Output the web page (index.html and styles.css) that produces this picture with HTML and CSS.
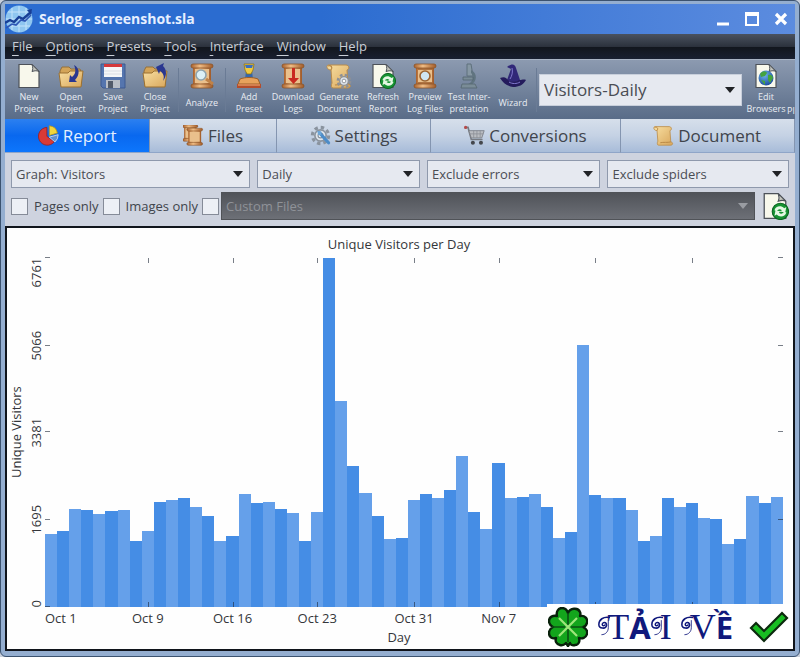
FILE: index.html
```html
<!DOCTYPE html>
<html lang="en">
<head>
    <meta charset="UTF-8">
    <meta name="viewport" content="width=device-width, initial-scale=1.0">
    <title>Serlog - screenshot.sla</title>
    <link rel="stylesheet" href="styles.css">
</head>
<body>
    <!-- Shared icon shapes -->
    <svg class="defs" width="0" height="0" aria-hidden="true">
        <defs>
            <linearGradient id="gold" x1="0" x2="1" y1="0" y2="1">
                <stop offset="0" stop-color="#f8dfa2"/>
                <stop offset="1" stop-color="#d9a75c"/>
            </linearGradient>
            <linearGradient id="copper" x1="0" x2="1">
                <stop offset="0" stop-color="#a8602c"/>
                <stop offset=".4" stop-color="#f0bd85"/>
                <stop offset="1" stop-color="#a05a28"/>
            </linearGradient>
            <radialGradient id="globe" cx=".4" cy=".3" r=".8">
                <stop offset="0" stop-color="#6fb6ea"/>
                <stop offset="1" stop-color="#123f96"/>
            </radialGradient>
        </defs>
        <symbol id="page" viewBox="0 0 26 26">
            <path d="M3 1.500h13l7 7V24.500H3z" fill="#f8f8ec" stroke="#4d5259" stroke-width="1.200"/>
            <path d="M16 1.500c1 3 1 5 0 7 3-1 5-1 7 0z" fill="#c3c4bd" stroke="#4d5259"/>
        </symbol>
        <symbol id="folder" viewBox="0 0 26 26">
            <path d="M2 8l2-4h7l2 2h9l1 3v14H3z" fill="#d3a458" stroke="#94703a"/>
            <path d="M1 10h9l2-2h13l-2 16H3z" fill="url(#gold)" stroke="#9b7132"/>
        </symbol>
        <symbol id="scroll" viewBox="0 0 26 26">
            <path d="M4 4h18v18H4z" fill="url(#copper)"/>
            <path d="M6 6h14v14H6z" fill="#eac08c"/>
            <rect x="2" y="1" width="22" height="4" rx="2" fill="url(#copper)" stroke="#8a5429" stroke-width=".8"/>
            <rect x="2" y="21" width="22" height="4" rx="2" fill="url(#copper)" stroke="#8a5429" stroke-width=".8"/>
        </symbol>
        <symbol id="refresh-page" viewBox="0 0 26 26">
            <use href="#page"/>
            <circle cx="18" cy="18" r="7.600" fill="#169332" stroke="#0a6720"/>
            <path d="M12.500 17c1-4 6-5 9-2l2-1-1 5-5-1 2-1c-2-2-4-1-5 1zM23.500 19c-1 4-6 5-9 2l-2 1 1-5 5 1-2 1c2 2 4 1 5-1z" fill="#e4f8e2"/>
        </symbol>
        <symbol id="parchment" viewBox="0 0 26 26">
            <path d="M2 2h18c3 0 4 4 1 5l1 14c3 0 3 4 0 4H7c-2 0-2-3-1-5L5 7C1 7 0 3 2 2z" fill="url(#gold)" stroke="#b98c4c"/>
            <path d="M2 3c3-1 5 1 3 4M9 22c4-1 9 0 13-1" fill="none" stroke="#b98744" stroke-width="1.200"/>
        </symbol>
        <symbol id="gear" viewBox="0 0 26 26">
            <circle cx="13" cy="13" r="10" fill="none" stroke="currentColor" stroke-width="4" stroke-dasharray="4.200 3.650"/>
            <circle cx="13" cy="13" r="7" fill="#dde4ec" stroke="currentColor" stroke-width="2"/>
            <circle cx="13" cy="13" r="3" fill="#fff" stroke="currentColor" stroke-width="1.500"/>
        </symbol>
        <symbol id="swash" viewBox="0 0 14 26">
            <path d="M14 2C6 0 1 5 1 10c0 5 8 6 9 1 0-4-5-4-5-1 0 2 3 2 3 0" fill="none" stroke="#10197c" stroke-width="1.800"/>
            <path d="M12 5v9c0 4-3 8-8 8" fill="none" stroke="#10197c"/>
        </symbol>
    </svg>

    <div class="window">
        <header class="titlebar">
            <svg class="app-icon" viewBox="0 0 28 28" aria-hidden="true">
                <circle cx="14" cy="14" r="13.500" fill="#8fc6f0"/>
                <path d="M14 1v26M7 3v22M21 3v22M1 14h26M3 7h22M3 21h22" stroke="#c3e3fa" fill="none"/>
                <path d="M0 18l5-3 4 2 5-5 4 2 8-7" fill="none" stroke="#183f96" stroke-width="2.400"/>
                <path d="M1 23l6-4 4 1 5-5 4 1 6-6" fill="none" stroke="#2e56b4" stroke-width="1.600"/>
                <path d="M22 5l5-1-1 6z" fill="#183f96"/>
            </svg>
            <h1>Serlog - screenshot.sla</h1>
            <div class="window-controls">
                <button type="button" aria-label="Minimize"><svg viewBox="0 0 14 14"><path d="M1 12h12" stroke="#fff" stroke-width="3"/></svg></button>
                <button type="button" aria-label="Maximize"><svg viewBox="0 0 14 14"><path d="M1 1h12v12H1z" fill="none" stroke="#fff" stroke-width="2"/><path d="M0 2h14" stroke="#fff" stroke-width="4"/></svg></button>
                <button type="button" aria-label="Close"><svg viewBox="0 0 14 14"><path d="M2 2l10 10M12 2L2 12" stroke="#fff" stroke-width="3.200"/></svg></button>
            </div>
        </header>

        <nav class="menubar">
            <a href="#file"><u>F</u>ile</a>
            <a href="#options"><u>O</u>ptions</a>
            <a href="#presets"><u>P</u>resets</a>
            <a href="#tools"><u>T</u>ools</a>
            <a href="#interface"><u>I</u>nterface</a>
            <a href="#window"><u>W</u>indow</a>
            <a href="#help"><u>H</u>elp</a>
        </nav>

        <div class="toolbar">
            <button type="button" class="tool">
                <svg viewBox="0 0 26 26"><use href="#page"/></svg>
                <span>New<br>Project</span>
            </button>
            <button type="button" class="tool">
                <svg viewBox="0 0 26 26"><use href="#folder"/><path d="M16 2c6 3 6 10 1 15l2 2-8 0 1-7 2 2c4-3 4-7 2-12z" fill="#2a3790"/></svg>
                <span>Open<br>Project</span>
            </button>
            <button type="button" class="tool">
                <svg viewBox="0 0 26 26">
                    <path d="M1 1h24v24H3l-2-2z" fill="#5575ae" stroke="#3f5a90"/>
                    <path d="M4 1h18v13H4z" fill="#f5f6f8"/><path d="M4 1h18v3H4z" fill="#d5393c"/>
                    <path d="M4 8h18M4 11h18" stroke="#dadde4"/>
                    <path d="M6 17h14v8H6z" fill="#b9bec6"/><path d="M8 18h5v7H8z" fill="#525b6a"/>
                </svg>
                <span>Save<br>Project</span>
            </button>
            <button type="button" class="tool">
                <svg viewBox="0 0 26 26"><use href="#folder"/><path d="M21 18c2-5 0-8-3-10l-1 3-3-7 8-4-1 3c4 4 4 10 0 15z" fill="#2a3790"/></svg>
                <span>Close<br>Project</span>
            </button>
            <i class="separator"></i>
            <button type="button" class="tool">
                <svg viewBox="0 0 26 26"><use href="#scroll"/><path d="M17 16l7 5" stroke="#c08248" stroke-width="3"/><circle cx="12" cy="12" r="5" fill="#dcf0f6" stroke="#8fa3ad" stroke-width="1.600"/></svg>
                <span>Analyze</span>
            </button>
            <i class="separator"></i>
            <button type="button" class="tool">
                <svg viewBox="0 0 26 26">
                    <path d="M10 8h6l1 8H9z" fill="#3567ab"/><path d="M8 1h10l-1 6-2 4h-4L9 7z" fill="#efc93f" stroke="#917218" stroke-width=".8"/><path d="M9 2h8l-1 3h-6z" fill="#3a6fc0"/>
                    <path d="M4 16c5-2 13-2 18 0l2 5H2z" fill="#e8a25c" stroke="#9c5f28"/><path d="M1 21h24v4H1z" fill="#b54c2b"/><path d="M2 22h22" stroke="#f0b477"/>
                </svg>
                <span>Add<br>Preset</span>
            </button>
            <button type="button" class="tool wide">
                <svg viewBox="0 0 26 26"><use href="#scroll"/><path d="M12 5h3v10h4l-5.500 6L8 15h4z" fill="#c92a1f"/></svg>
                <span>Download<br>Logs</span>
            </button>
            <button type="button" class="tool wide">
                <svg viewBox="0 0 26 26" color="#8d9096"><use href="#parchment"/><use href="#gear" x="10" y="10" width="16" height="16"/></svg>
                <span>Generate<br>Document</span>
            </button>
            <button type="button" class="tool">
                <svg viewBox="0 0 26 26"><use href="#refresh-page"/></svg>
                <span>Refresh<br>Report</span>
            </button>
            <button type="button" class="tool">
                <svg viewBox="0 0 26 26"><use href="#scroll"/><path d="M6 6h14M6 20h14" stroke="#9b5b2a" stroke-width="1.500"/><circle cx="13" cy="13" r="5" fill="#cfe6f2" stroke="#9c6431" stroke-width="1.600"/></svg>
                <span>Preview<br>Log Files</span>
            </button>
            <button type="button" class="tool wide">
                <svg viewBox="0 0 26 26">
                    <path d="M11 1h4l2 12h-6z" fill="#8798a4" stroke="#5e707c"/><path d="M15 7c7 3 6 12 0 15h-5c7-2 9-9 5-12z" fill="#607480"/>
                    <path d="M7 14h10v3H7zM6 21h13l2 4H5z" fill="#7a8c97" stroke="#54656f" stroke-width=".8"/>
                </svg>
                <span>Test Inter-<br>pretation</span>
            </button>
            <button type="button" class="tool">
                <svg viewBox="0 0 26 26">
                    <path d="M7 17L11 6l-4-2c5-4 8-3 9 1l4 12c-3 3-10 3-13 0z" fill="#312878"/><path d="M0 15c5-2 6 0 9 3 4 1 8 1 10-1 3 0 5-1 7 0-3 5-7 7-13 7C7 23 3 20 0 15z" fill="#241b5c"/>
                    <path d="M12 5c1 4 0 8-2 11M9 19c3 2 8 2 11 0" fill="none" stroke="#8179cf"/>
                </svg>
                <span>Wizard</span>
            </button>
            <i class="separator"></i>
            <select class="preset-select" aria-label="Preset">
                <option>Visitors-Daily</option>
            </select>
            <button type="button" class="tool">
                <svg viewBox="0 0 26 26"><use href="#page"/><circle cx="13" cy="15" r="7.500" fill="url(#globe)"/><path d="M7 11c3-4 6-3 7-1l-2 3-4 1zM15 12c3-1 5 1 5 3l-3 5-2-3zM8 17l4 1v4z" fill="#45a33f"/></svg>
                <span>Edit<br>Browsers</span>
            </button>
            <button type="button" class="tool cut"><span><br>Pl</span></button>
        </div>

        <nav class="tabs">
            <a href="#report" class="tab active">
                <svg viewBox="0 0 26 26"><path d="M11 3a11 11 0 1 0 9 18l-9-7z" fill="#d93a36" stroke="#9c1e1e"/><path d="M14 1a11 11 0 0 1 10 9l-10 3z" fill="#f2d63c" stroke="#b4921b"/><path d="M25 12a12 12 0 0 1-4 9l-7-6z" fill="#5f8fd2" stroke="#d8e4f4"/></svg>
                Report
            </a>
            <a href="#files" class="tab">
                <svg viewBox="0 0 26 26"><use href="#scroll" x="-2" y="-1" width="22" height="22"/><use href="#scroll" x="3" y="3" width="23" height="23"/></svg>
                Files
            </a>
            <a href="#settings" class="tab">
                <svg viewBox="0 0 26 26" color="#8a939e"><use href="#gear"/><path d="M12 10l11 12" stroke="#4c8cc8" stroke-width="4" stroke-linecap="round"/><path d="M9 7l5 1v5l-4-1z" fill="#6aa5d8"/></svg>
                Settings
            </a>
            <a href="#conversions" class="tab">
                <svg viewBox="0 0 26 26"><path d="M1 3h4l4 15h14" fill="none" stroke="#777b82" stroke-width="2"/><path d="M6 7h19l-3 9H9z" fill="#b9bcc1" stroke="#777b82"/><path d="M12 7v9M16 7v9M20 7v9M7 11h17" stroke="#8b8f96"/><circle cx="11" cy="22" r="2.500" fill="#44474d"/><circle cx="21" cy="22" r="2.500" fill="#44474d"/><circle cx="2" cy="3" r="2" fill="#b44a4a"/></svg>
                Conversions
            </a>
            <a href="#document" class="tab">
                <svg viewBox="0 0 26 26"><use href="#parchment"/></svg>
                Document
            </a>
        </nav>

        <form class="filters">
            <div class="filter-row">
                <select aria-label="Graph"><option>Graph: Visitors</option></select>
                <select aria-label="Interval"><option>Daily</option></select>
                <select aria-label="Errors"><option>Exclude errors</option></select>
                <select aria-label="Spiders"><option>Exclude spiders</option></select>
            </div>
            <div class="file-row">
                <input type="checkbox" id="pages-only"><label for="pages-only">Pages only</label>
                <input type="checkbox" id="images-only"><label for="images-only">Images only</label>
                <input type="checkbox" id="custom-files" aria-label="Custom files">
                <select class="custom-files" aria-label="Custom file list" disabled><option>Custom Files</option></select>
                <button type="button" class="refresh" aria-label="Refresh report"><svg viewBox="0 0 26 26"><use href="#refresh-page"/></svg></button>
            </div>
        </form>

        <main class="report">
            <h2>Unique Visitors per Day</h2>
            <div class="y-title">Unique Visitors</div>
            <div class="y-axis" id="y-axis"></div>
            <div class="plot" id="plot"></div>
            <div class="x-axis" id="x-axis"></div>
            <div class="x-title">Day</div>

            <a href="#download" class="download">
                <svg class="clover" viewBox="0 0 40 40" aria-hidden="true">
                    <path d="M20 6C22 1 30 0 32 5c1 2 0 3 0 4 5-1 8 3 7 7-1 3-3 4-4 4 2 1 5 3 4 7-1 4-5 5-8 4 1 3 0 7-4 7-3 1-5-1-5-2l-2 3-2-3c-1 1-3 3-6 2-4-1-5-4-4-7-3 1-7 0-7-5 0-3 2-5 4-6-2-1-4-3-4-6 0-4 4-6 8-5-1-4 1-8 5-8 3 0 5 2 6 5z" fill="#13a51c" stroke="#09210b" stroke-width="2.400" stroke-linejoin="round"/>
                    <path d="M20 6v12M20 22v13M4 20h13M23 20h12" stroke="#0c5013" stroke-width="1.600"/>
                    <path d="M11 11l18 18M29 11L11 29" stroke="#a0e67b" stroke-width="2.200"/>
                </svg>
                <span class="download-text"><svg viewBox="0 0 14 26" aria-hidden="true"><use href="#swash"/></svg>T<b>Ả</b><svg viewBox="0 0 14 26" aria-hidden="true"><use href="#swash"/></svg>I <svg viewBox="0 0 14 26" aria-hidden="true"><use href="#swash"/></svg>V<b>Ề</b></span>
                <svg class="check" viewBox="0 0 40 32" aria-hidden="true">
                    <path d="M2 17l5-5 8 8L33 2l5 5-23 23z" fill="#18bd22" stroke="#0c2a0e" stroke-width="2.200"/>
                </svg>
            </a>
        </main>
    </div>

    <script>
        // Unique visitors for each day, starting October 1
        const visitors = [
            1405, 1477, 1898, 1879, 1801, 1852, 1885, 1276, 1463, 2040,
            2079, 2118, 1943, 1762, 1282, 1385, 2182, 2021, 2040, 1904,
            1826, 1282, 1840, 6761, 3983, 2739, 2215, 1768, 1308, 1341,
            2065, 2195, 2104, 2260, 2934, 1846, 1510, 2798, 2118, 2137,
            2195, 1943, 1346, 1444, 5071, 2176, 2104, 2118, 1879, 1282,
            1385, 2104, 1937, 2021, 1716, 1710, 1230, 1327, 2157, 2007, 2137
        ];
        const max = 6761;
        const yTicks = [0, 1695, 3381, 5066, 6761];
        const xTicks = [
            { day: 0, label: 'Oct 1' },
            { day: 8, label: 'Oct 9' },
            { day: 15, label: 'Oct 16' },
            { day: 22, label: 'Oct 23' },
            { day: 30, label: 'Oct 31' },
            { day: 37, label: 'Nov 7' },
            { day: 45 },
            { day: 53 }
        ];

        const plot = document.getElementById('plot');
        const yAxis = document.getElementById('y-axis');
        const xAxis = document.getElementById('x-axis');

        function add(parent, className, side, percent, text) {
            const el = document.createElement('span');
            el.className = className;
            el.style[side] = percent + '%';
            el.textContent = text || '';
            parent.appendChild(el);
        }

        visitors.forEach((count) => add(plot, 'bar', 'height', count / max * 100));

        yTicks.forEach((value) => {
            const percent = value / max * 100;
            const edge = value === 0 ? ' first' : value === max ? ' last' : '';
            add(yAxis, 'y-label' + edge, 'bottom', percent, String(value));
            add(plot, 'tick left', 'bottom', percent);
            add(plot, 'tick right', 'bottom', percent);
        });

        xTicks.forEach((tick) => {
            const percent = tick.day === 0 ? 0 : (tick.day + 0.5) / visitors.length * 100;
            if (tick.label) {
                add(xAxis, 'x-label' + (tick.day === 0 ? ' first' : ''), 'left', percent, tick.label);
            }
            if (tick.day > 0) {
                add(plot, 'tick top', 'left', percent);
                add(plot, 'tick bottom', 'left', percent);
            }
        });
    </script>
</body>
</html>
```
FILE: styles.css
```css
* {
    box-sizing: border-box;
}

body {
    margin: 0;
    background-color: #c9d0dc;
    font-family: "Open Sans", "Noto Sans", sans-serif;
    font-size: 13px;
    color: #40444c;
}

button {
    font-family: inherit;
    background: none;
    border: none;
    padding: 0;
    cursor: pointer;
}

a {
    color: inherit;
    text-decoration: none;
}

.defs {
    position: absolute;
}

.window {
    display: flex;
    flex-direction: column;
    min-height: 100vh;
    padding: 3px 4px 5px;
    border: 1px solid #3b526f;
    border-radius: 6px;
    background-color: #94aed0;
}

/* Title bar */
.titlebar {
    display: flex;
    align-items: center;
    height: 30px;
    padding-right: 7px;
    background: linear-gradient(to right, #2b6cd0 40%, #5c8cdf);
}

.app-icon {
    width: 28px;
    height: 28px;
}

.titlebar h1 {
    flex: 1;
    margin: 0 0 0 6px;
    font-size: 14px;
    line-height: 20px;
    color: #e6efff;
}

.window-controls {
    display: flex;
    gap: 15px;
}

.window-controls svg {
    display: block;
    width: 14px;
    height: 14px;
}

/* Menu */
.menubar {
    display: flex;
    gap: 13px;
    height: 25px;
    padding: 2px 7px;
    font-size: 13px;
    line-height: 20px;
    color: #c9ced6;
    background: linear-gradient(#4a525f, #2c323d 50%, #12161d 52%, #192031);
}

.menubar u {
    text-underline-offset: 4px;
}

/* Toolbar */
.toolbar {
    display: flex;
    align-items: center;
    height: 60px;
    padding-left: 3px;
    overflow: hidden;
    border-top: 1px solid #a9b4c5;
    background: linear-gradient(#8c9ab0, #596c88);
}

.tool {
    flex: none;
    display: flex;
    flex-direction: column;
    align-items: center;
    width: 42px;
    height: 54px;
    font-size: 9px;
    line-height: 12px;
    color: #e9edf3;
    white-space: nowrap;
}

.tool svg {
    flex: none;
    width: 26px;
    height: 26px;
}

.tool span {
    display: flex;
    flex: 1;
    flex-direction: column;
    justify-content: center;
}

.tool.wide {
    width: 46px;
}

.tool.cut {
    width: 8px;
    align-items: flex-start;
    justify-content: flex-end;
}

.tool.cut span {
    display: block;
    flex: none;
}

.separator {
    flex: none;
    width: 1px;
    height: 44px;
    margin: 0 2px;
    background-color: #6a7b95;
}

select {
    appearance: none;
    min-width: 0;
    height: 28px;
    padding: 0 24px 0 4px;
    border: 1px solid #8f99ac;
    border-radius: 0;
    font-family: inherit;
    font-size: 13px;
    color: #4a4d54;
    background: #e6e9f0 url("data:image/svg+xml,%3Csvg xmlns='http://www.w3.org/2000/svg' width='10' height='6'%3E%3Cpath d='M0 0h10L5 6z' fill='%23202226'/%3E%3C/svg%3E") no-repeat right 6px center;
}

.preset-select {
    flex: 1;
    height: 32px;
    margin-right: 3px;
    border-color: #c8cfdb;
    font-size: 17px;
}

/* Tabs */
.tabs {
    display: flex;
    height: 34px;
}

.tab {
    flex: 1 1 auto;
    display: flex;
    align-items: center;
    justify-content: center;
    gap: 4px;
    font-size: 17px;
    line-height: 24px;
    border-right: 1px solid #8495b0;
    border-bottom: 1px solid #8fa5c8;
    background: linear-gradient(#d6dfeb, #c5d2e4 50%, #a8bcd9);
}

.tab svg {
    width: 21px;
    height: 21px;
}

.tab.active {
    color: #e3efff;
    background: linear-gradient(#2c80f0, #0968ef 50%, #0d76fc);
}

/* Filters */
.filters {
    display: flex;
    flex-direction: column;
    gap: 4px;
    padding: 7px 6px 6px;
    background-color: #ced3df;
}

.filter-row {
    display: grid;
    grid-template-columns: 240fr 163fr 174fr 182fr;
    gap: 7px;
}

.file-row {
    display: flex;
    align-items: center;
}

.file-row label {
    margin: 0 4px 0 6px;
    white-space: nowrap;
}

input[type="checkbox"] {
    appearance: none;
    flex: none;
    width: 17px;
    height: 17px;
    margin: 0;
    border: 1px solid #858b98;
    background-color: #edf0f6;
}

input[type="checkbox"]:checked {
    background-color: #2c80f0;
}

.custom-files {
    flex: 1;
    margin: 0 6px 0 2px;
    border-color: #505358;
    color: #8f9298;
    opacity: 1;
    background: url("data:image/svg+xml,%3Csvg xmlns='http://www.w3.org/2000/svg' width='10' height='6'%3E%3Cpath d='M0 0h10L5 6z' fill='%23999ca2'/%3E%3C/svg%3E") no-repeat right 6px center, linear-gradient(#505359, #6d7077);
}

.refresh svg {
    display: block;
    width: 28px;
    height: 28px;
}

/* Report chart */
.report {
    position: relative;
    flex: 1;
    display: grid;
    grid-template-columns: 20px 18px 1fr;
    grid-template-rows: 30px 1fr 20px 22px;
    padding-right: 10px;
    border: 2px solid #10141b;
    background-color: #fefefe;
    color: #34363a;
}

.report h2 {
    grid-column: 1 / -1;
    margin: 6px 0 0 8px;
    font-size: 13px;
    font-weight: normal;
    line-height: 20px;
    text-align: center;
}

.y-title,
.y-label {
    writing-mode: vertical-rl;
    transform: rotate(180deg);
    line-height: 18px;
}

.y-title {
    text-align: center;
}

.y-axis,
.plot,
.x-axis {
    position: relative;
}

.y-label {
    position: absolute;
    right: 0;
    transform: translateY(50%) rotate(180deg);
}

.y-label.first {
    transform: rotate(180deg);
}

.y-label.last {
    transform: translateY(100%) rotate(180deg);
}

.plot {
    display: flex;
    align-items: flex-end;
}

.bar {
    flex: 1;
    background-color: #65a0ea;
}

.bar:nth-child(even) {
    background-color: #458de5;
}

.tick {
    position: absolute;
    background-color: rgba(30, 40, 55, 0.6);
}

.tick.left,
.tick.right {
    width: 5px;
    height: 1px;
}

.tick.left {
    left: 0;
}

.tick.right {
    right: 0;
}

.tick.top,
.tick.bottom {
    width: 1px;
    height: 5px;
}

.tick.top {
    top: 0;
}

.tick.bottom {
    bottom: 0;
}

.x-axis {
    grid-column: 3;
}

.x-label {
    position: absolute;
    line-height: 22px;
    transform: translateX(-50%);
    white-space: nowrap;
}

.x-label.first {
    transform: none;
}

.x-title {
    grid-column: 1 / -1;
    margin-left: 8px;
    line-height: 20px;
    text-align: center;
}

/* Download banner in the corner of the chart */
.download {
    position: absolute;
    right: 0;
    bottom: 0;
    display: flex;
    align-items: center;
    gap: 10px;
    height: 45px;
    padding: 0 4px 0 1px;
    color: #10197c;
    background-color: #fff;
}

.clover {
    width: 40px;
    height: 40px;
}

.download-text {
    margin-right: 6px;
    font-family: "Liberation Serif", serif;
    font-size: 36px;
    line-height: 44px;
    white-space: nowrap;
}

.download-text svg {
    width: 12px;
    height: 24px;
    margin-right: -3px;
}

.download-text b {
    font-family: "Noto Sans", sans-serif;
    font-size: 31px;
}

.check {
    width: 40px;
    height: 32px;
}
```
